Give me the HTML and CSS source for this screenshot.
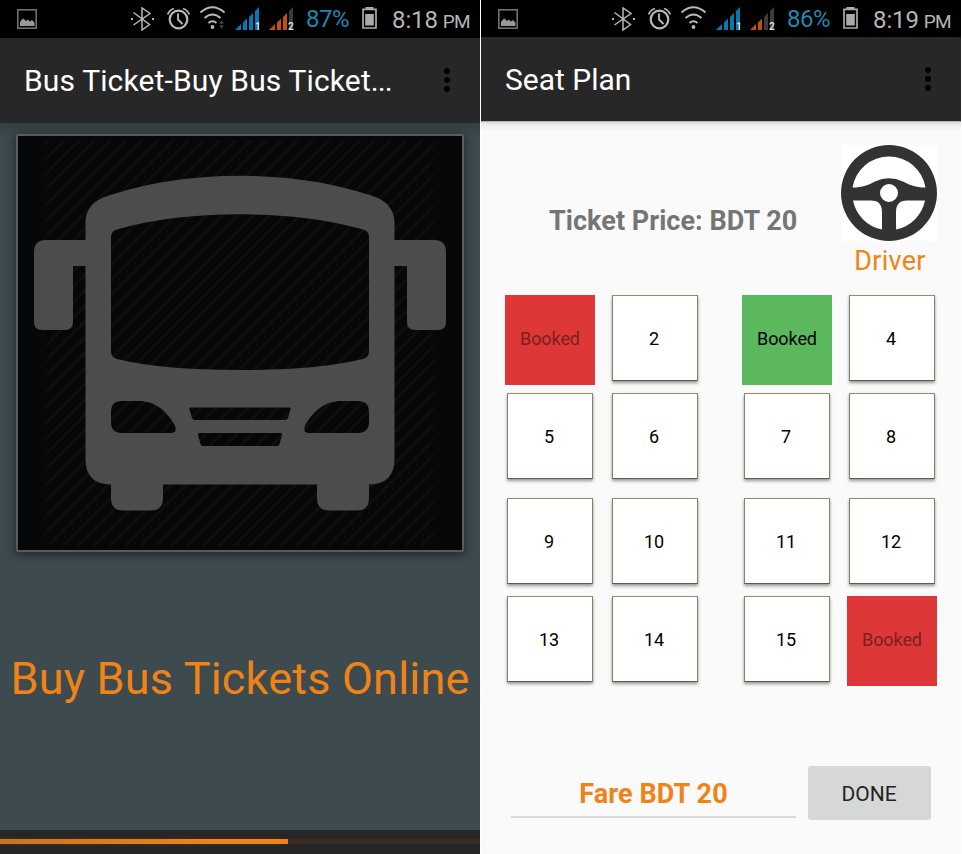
FILE: index.html
```html
<!DOCTYPE html>
<html lang="en">
<head>
<meta charset="utf-8">
<title>Bus Ticket</title>
<link rel="stylesheet" href="styles.css">
</head>
<body>
<svg class="defs" width="0" height="0" aria-hidden="true">
  <symbol id="i-picture" viewBox="0 0 20 20">
    <rect x=".8" y=".8" width="18.400" height="18.400" fill="none" stroke="#777" stroke-width="1.500"/>
    <path d="M3 17v-4l2-2.500 1.500-1 2.500 2.500 2-1.500 2 2 2-1.500 2.500 2.500v3.500z" fill="#999"/>
  </symbol>
  <symbol id="i-bluetooth" viewBox="0 0 24 24">
    <path d="M2.500 5.500 18.500 17.500 11 23V1l8 5.500L2.500 18" fill="none" stroke="#b8b8b8" stroke-width="1.500"/>
    <path d="M0 11h2v2H0zM21 11h2v2h-2z" fill="#b8b8b8"/>
  </symbol>
  <symbol id="i-alarm" viewBox="0 0 24 24">
    <g fill="none" stroke="#b8b8b8">
      <circle cx="11.500" cy="12.500" r="8.800" stroke-width="2.200"/>
      <path d="M11 6.500v6l4.500 4.500" stroke-width="1.900"/>
      <path d="M.7 7.500Q2.500 3 7 1.500M22.300 7.500Q20.500 3 16 1.500" stroke-width="1.800"/>
    </g>
  </symbol>
  <symbol id="i-wifi" viewBox="0 0 26 24">
    <g fill="none" stroke="#b8b8b8" stroke-width="2">
      <path d="M.5 6.500q12-10.500 24 0M4.500 12q8-7 16 0M8.500 17q4-3.500 8 0"/>
    </g>
    <circle cx="12.500" cy="21" r="1.900" fill="#b8b8b8"/>
  </symbol>
  <symbol id="i-wifi-arrows" viewBox="0 0 6 10">
    <path d="M.5 4 3 0l2.500 4zM.5 6 3 10l2.500-4z" fill="#4a4a4a"/>
  </symbol>
  <symbol id="i-battery" viewBox="0 0 15 24">
    <path d="M1 3.300h13V22H1z" fill="none" stroke="#aaa" stroke-width="1.700"/>
    <path d="M3.500 1h8v2h-8zM3.200 8h8.600v11.500H3.200z" fill="#aaa"/>
  </symbol>
  <symbol id="i-more" viewBox="0 0 6 24">
    <circle cx="3" cy="3" r="3"/><circle cx="3" cy="12" r="3"/><circle cx="3" cy="21" r="3"/>
  </symbol>
</svg>

<main class="screens">
  <section class="phone home">
    <header class="status">
      <svg class="picture"><use href="#i-picture"/></svg>
      <svg class="bluetooth"><use href="#i-bluetooth"/></svg>
      <svg class="alarm"><use href="#i-alarm"/></svg>
      <svg class="wifi"><use href="#i-wifi"/><use href="#i-wifi-arrows" x="19" y="14" width="5" height="9"/></svg>
      <svg class="signal" viewBox="0 0 26 24">
        <path d="M0 24 6 18v6zM8 16.500l4-4V24H8zM14 11l4-4v17h-4zM20 5l4-4v23h-4z" fill="#0878b0"/>
        <text x="20" y="23.500">1</text>
      </svg>
      <svg class="signal" viewBox="0 0 26 24">
        <path d="M0 24 6 18v6zM8 16.500l4-4V24H8zM14 11l4-4v17h-4z" fill="#c35208"/>
        <path d="M20 5l4-4v23h-4z" fill="#3c3c3c"/>
        <text x="19" y="23.500">2</text>
      </svg>
      <span class="percent">87%</span>
      <svg class="battery"><use href="#i-battery"/></svg>
      <span class="clock">8:18 <small>PM</small></span>
    </header>
    <div class="appbar">
      <h1>Bus Ticket-Buy Bus Ticket<span class="dots">...</span></h1>
      <svg class="more"><use href="#i-more"/></svg>
    </div>
    <div class="splash">
      <div class="frame">
        <svg class="bus" viewBox="18 136 444 414">
          <defs>
            <pattern id="stripes" width="11" height="11" patternUnits="userSpaceOnUse" patternTransform="rotate(45)">
              <rect width="3" height="11" fill="#fff"/>
            </pattern>
            <linearGradient id="fade">
              <stop offset="0" stop-color="#fff" stop-opacity="0"/><stop offset=".04" stop-color="#fff"/>
              <stop offset=".96" stop-color="#fff"/><stop offset="1" stop-color="#fff" stop-opacity="0"/>
            </linearGradient>
            <mask id="edge"><rect x="36" y="140" width="408" height="406" fill="url(#fade)"/></mask>
          </defs>
          <rect x="36" y="140" width="408" height="406" fill="url(#stripes)" mask="url(#edge)" opacity=".022"/>
          <path fill="#4d4d4d" fill-opacity=".985" fill-rule="evenodd" d="M85.500 240V223C85.500 208 95 199 112 194.500Q170 175.700 240 175.700T368 194.500C385 199 394.500 208 394.500 223V240H434Q446 240 446 252V322Q446 330 438 330H415Q407 330 407 322V266H394.500V458.500Q394.500 484.500 369 484.500V498Q369 510.500 357 510.500H329Q317 510.500 317 498V484.500H163V498Q163 510.500 151 510.500H123Q111 510.500 111 498V484.500Q85.500 484.500 85.500 458.500V266H73V322Q73 330 65 330H42Q34 330 34 322V252Q34 240 46 240ZM111 237Q111 231 117 229.500Q170 214.300 240 214.300T363 229.500Q369 231 369 237V352Q369 357 363 359Q318 370 240 370T117 359Q111 357 111 352ZM122 401H138C156 401 166 411 174.500 424.500Q178 433 171 433H122Q111 433 111 422V412Q111 401 122 401ZM358 401H342C324 401 314 411 305.500 424.500Q302 433 309 433H358Q369 433 369 422V412Q369 401 358 401ZM191 407.500H289Q291 407.500 290.500 409.500L288 418Q287.300 420 285 420H195Q192.700 420 192 418L189.500 409.500Q189 407.500 191 407.500ZM199.500 433H280.500Q282.500 433 282 435L279.500 444Q279 446 277 446H203Q201 446 200.500 444L198 435Q197.500 433 199.500 433Z"/>
          <rect x="36" y="140" width="408" height="406" fill="url(#stripes)" mask="url(#edge)" opacity=".005"/>
        </svg>
      </div>
      <p class="tagline">Buy Bus Tickets Online</p>
    </div>
    <div class="loading"><div class="track"><div class="bar"></div></div></div>
  </section>

  <section class="phone seats-screen">
    <header class="status">
      <svg class="picture"><use href="#i-picture"/></svg>
      <svg class="bluetooth"><use href="#i-bluetooth"/></svg>
      <svg class="alarm"><use href="#i-alarm"/></svg>
      <svg class="wifi"><use href="#i-wifi"/></svg>
      <svg class="signal" viewBox="0 0 26 24">
        <path d="M0 24 6 18v6zM8 16.500l4-4V24H8zM14 11l4-4v17h-4zM20 5l4-4v23h-4z" fill="#0878b0"/>
        <text x="20" y="23.500">1</text>
      </svg>
      <svg class="signal" viewBox="0 0 26 24">
        <path d="M0 24 6 18v6zM8 16.500l4-4V24H8z" fill="#c35208"/>
        <path d="M14 11l4-4v17h-4zM20 5l4-4v23h-4z" fill="#3c3c3c"/>
        <text x="19" y="23.500">2</text>
      </svg>
      <span class="percent">86%</span>
      <svg class="battery"><use href="#i-battery"/></svg>
      <span class="clock">8:19 <small>PM</small></span>
    </header>
    <div class="appbar">
      <h1>Seat Plan</h1>
      <svg class="more"><use href="#i-more"/></svg>
    </div>
    <div class="plan">
      <div class="summary">
        <p class="price">Ticket Price: BDT 20</p>
        <div class="driver">
          <svg viewBox="0 0 96 96">
            <rect width="96" height="96" fill="#fff"/>
            <path fill="#333" fill-rule="evenodd" d="M48 0A48 48 0 1 1 48 96A48 48 0 1 1 48 0ZM11.500 42.500C22 42.500 27 40 34 36.500Q48 30 62 36.500C69 40 74 42.500 84.500 42.500A37 37 0 0 0 11.500 42.500ZM12 55.500A37 37 0 0 0 41 84.500V67Q41 55.500 30 55.500ZM84 55.500A37 37 0 0 1 55 84.500V67Q55 55.500 66 55.500ZM48 39A9 9 0 1 0 48 57A9 9 0 1 0 48 39Z"/>
          </svg>
          <span>Driver</span>
        </div>
      </div>
      <div class="seats">
        <div class="row"><button class="seat taken">Booked</button><button class="seat">2</button><button class="seat mine">Booked</button><button class="seat">4</button></div>
        <div class="row"><button class="seat">5</button><button class="seat">6</button><button class="seat">7</button><button class="seat">8</button></div>
        <div class="row second"><button class="seat">9</button><button class="seat">10</button><button class="seat">11</button><button class="seat">12</button></div>
        <div class="row"><button class="seat">13</button><button class="seat">14</button><button class="seat">15</button><button class="seat taken">Booked</button></div>
      </div>
      <div class="checkout">
        <div class="fare">Fare BDT 20</div>
        <button class="done">DONE</button>
      </div>
    </div>
  </section>
</main>
</body>
</html>
```
FILE: styles.css
```css
* { box-sizing: border-box; }
body { margin: 0; background: #fff; font-family: Roboto, sans-serif; }
h1, p { margin: 0; font-weight: 400; }
button { border: 0; padding: 0; font-family: inherit; }
.defs { position: absolute; }
.screens { display: flex; gap: 1px; width: 962px; height: 854px; overflow: hidden; }
.phone { width: 480px; height: 854px; display: flex; flex-direction: column; }

.status { display: flex; align-items: center; height: 38px; padding-left: 17px; background: #000; white-space: nowrap; }
.status svg { flex: none; display: block; }
.seats-screen .status { height: 37px; }
.picture { width: 20px; height: 20px; margin-right: 94px; }
.bluetooth { width: 24px; height: 24px; margin-right: 12px; }
.alarm { width: 24px; height: 24px; margin-right: 9px; }
.wifi { width: 26px; height: 24px; margin: -2px 9px 0 0; }
.signal { width: 26px; height: 24px; margin: -2px 8px 0 0; }
.status .signal { overflow: visible; }
.signal text { font: 700 10px Roboto, sans-serif; fill: #ddd; }
.percent { width: 56px; margin-left: 3px; font-size: 24px; color: #2186b0; letter-spacing: -.5px; }
.battery { width: 15px; height: 24px; margin: -2px 15px 0 0; }
.clock { font-size: 24px; color: #b5b5b5; letter-spacing: -.1px; padding-top: 2px; }
.clock small { margin-left: -1px; font-size: 19px; letter-spacing: -.6px; }

.appbar { display: flex; align-items: center; justify-content: space-between; height: 85px; padding: 0 30px 0 24px; background: #272727; color: #fff; }
.seats-screen .appbar { height: 84px; }
.appbar h1 { font-size: 30px; }
.home h1 { letter-spacing: .14px; }
.dots { letter-spacing: -1px; }
.home .more { margin-top: -2px; }
.more { width: 6px; height: 24px; }

.splash { flex: 1; background: linear-gradient(#333e40, #3d4a4e 14px); display: flex; flex-direction: column; align-items: center; }
.frame { width: 448px; height: 418px; margin-top: 11px; border: 2px solid #5b5b5b; border-radius: 2px; background: #050708; box-shadow: 0 2px 10px 1px #1c221ecc; }
.bus { display: block; width: 444px; height: 414px; }
.tagline { margin-top: 100px; font-size: 45px; line-height: 53px; color: #f08317; letter-spacing: .2px; white-space: nowrap; }
.loading { height: 24px; padding-top: 9px; background: #262626; }
.track { height: 5px; background: #392d25; }
.bar { width: 288px; height: 5px; background: linear-gradient(90deg, #c97320, #f08317 75%); box-shadow: -6px 0 4px -1px #b8651866; }

.plan { flex: 1; padding: 24px 24px 0; background: linear-gradient(#8b8b8b 0, #dcdcdc 1px, #eee 4px, #fafafa 10px); }
.summary { display: flex; height: 150px; }
.price { width: 336px; padding: 60px 0 0 44px; font-size: 27px; line-height: 32px; font-weight: 700; letter-spacing: .04px; color: #757575; white-space: nowrap; }
.driver { width: 96px; text-align: center; font-size: 27px; line-height: 32px; letter-spacing: .3px; color: #f08317; }
.driver span { padding-left: 2px; }
.driver svg { display: block; width: 96px; height: 96px; margin-bottom: 4px; }
.seats { display: flex; flex-direction: column; gap: 8px; }
.row { display: flex; gap: 15px; height: 90px; }
.row.second { margin-top: 7px; }
.seat { width: 86px; height: 86px; margin: 0 2px; padding-right: 2px; border: 1px solid #8c7f66; border-color: #978b6f #8c7f66 #665842; background: #fff; box-shadow: 0 2px 3px #00000066; font-size: 18px; color: #000; }
.seat:nth-child(3) { margin-left: 29px; }
.seat.taken, .seat.mine { width: 90px; height: 90px; margin: 0; padding: 0 0 4px; border: 0; box-shadow: none; letter-spacing: -.1px; }
.seat.mine { margin-left: 27px; background: #5cb85c; }
.seat.taken { background: #dd3737; color: #7b1f22; }
.checkout { display: flex; align-items: flex-start; gap: 12px; margin: 80px 6px 0; }
.fare { width: 285px; height: 52px; padding-top: 12px; border-bottom: 2px solid #d6d7d7; text-align: center; font-size: 27px; line-height: 32px; font-weight: 700; letter-spacing: .1px; color: #f08317; }
.done { width: 123px; height: 54px; padding: 1px 1px 0 0; border-radius: 3px; background: #d6d8d7; color: #222; font-size: 21px; }
```
